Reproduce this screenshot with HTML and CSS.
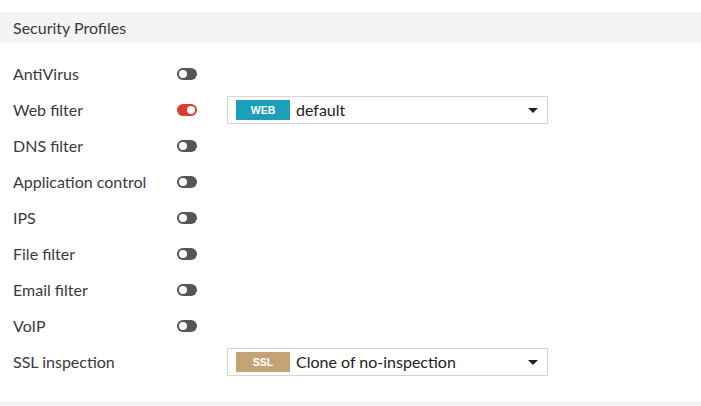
FILE: index.html
```html
<!DOCTYPE html>
<html lang="en">
<head>
    <meta charset="UTF-8">
    <title>Security Profiles</title>
    <link rel="stylesheet" href="styles.css">
</head>
<body>
<div class="section">
    <div class="section-title">Security Profiles</div>
    <ul class="profiles">
        <li class="row"><span class="label">AntiVirus</span><span class="toggle"></span></li>
        <li class="row">
            <span class="label">Web filter</span><span class="toggle on"></span>
            <div class="select"><span class="badge web">WEB</span><span class="value">default</span><span class="caret"></span></div>
        </li>
        <li class="row"><span class="label">DNS filter</span><span class="toggle"></span></li>
        <li class="row"><span class="label">Application control</span><span class="toggle"></span></li>
        <li class="row"><span class="label">IPS</span><span class="toggle"></span></li>
        <li class="row"><span class="label">File filter</span><span class="toggle"></span></li>
        <li class="row"><span class="label">Email filter</span><span class="toggle"></span></li>
        <li class="row"><span class="label">VoIP</span><span class="toggle"></span></li>
        <li class="row">
            <span class="label">SSL inspection</span><span class="toggle none"></span>
            <div class="select"><span class="badge ssl">SSL</span><span class="value">Clone of no-inspection</span><span class="caret"></span></div>
        </li>
    </ul>
</div>
<div class="section-end"></div>
</body>
</html>
```

FILE: styles.css
```css
*{
    margin: 0;
    padding: 0;
    box-sizing: border-box;
}
body{
    background: #fff;
    font-family: Lato, "Liberation Sans", sans-serif;
    font-size: 16px;
    color: #3a3a3a;
}
.section{
    padding-top: 12px;
}
.section-title{
    height: 31px;
    line-height: 32px;
    padding-left: 13px;
    background: #f4f4f4;
}
.profiles{
    list-style: none;
    padding: 13px 0 0 13px;
}
.row{
    display: flex;
    align-items: center;
    height: 36px;
}
.label{
    width: 164px;
    padding-bottom: 2px;
}
.toggle{
    position: relative;
    width: 20px;
    height: 12px;
    border-radius: 6px;
    background: #555;
}
.toggle::after{
    content: "";
    position: absolute;
    top: 2px;
    left: 2px;
    width: 8px;
    height: 8px;
    border-radius: 50%;
    background: #fff;
}
.toggle.on{
    background: #de3a2c;
}
.toggle.on::after{
    left: 10px;
}
.toggle.none{
    visibility: hidden;
}
.select{
    display: flex;
    align-items: center;
    width: 321px;
    height: 28px;
    margin-left: 30px;
    padding: 0 8px;
    border: 1px solid #d6d6d6;
    background: #fff;
}
.badge{
    width: 54px;
    height: 20px;
    line-height: 20px;
    text-align: center;
    font-family: "Liberation Sans", Arial, sans-serif;
    font-size: 10.5px;
    font-weight: bold;
    color: #fff;
}
.badge.web{
    background: #1b9fbb;
}
.badge.ssl{
    background: #c3a276;
}
.value{
    flex: 1;
    margin-left: 6px;
    padding-bottom: 2px;
    color: #222;
}
.caret{
    width: 0;
    height: 0;
    margin-right: 1px;
    border-left: 5px solid transparent;
    border-right: 5px solid transparent;
    border-top: 5px solid #222;
}
.section-end{
    margin-top: 21px;
    height: 10px;
    background: #f4f4f4;
}
```
